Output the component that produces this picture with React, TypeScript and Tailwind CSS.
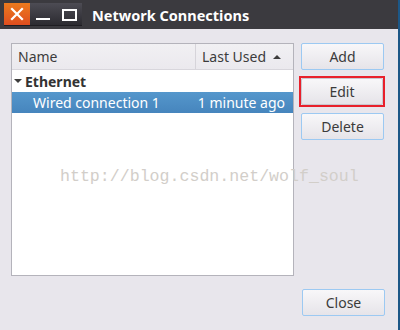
import React from "react";

function Btn({ children, className = "" }: { children: React.ReactNode; className?: string }) {
  return (
    <div
      className={
        "h-[27px] w-[83px] flex items-center justify-center rounded-[2px] border border-[#9cc9f2] bg-gradient-to-b from-[#f8f7f9] to-[#e6e4e9] text-[14px] text-[#3b3b3b] " +
        className
      }
    >
      {children}
    </div>
  );
}

export default function App() {
  return (
    <div
      className="relative w-[400px] h-[330px] overflow-hidden bg-[#e8e6ec] flex flex-col"
      style={{ fontFamily: '"Noto Sans", "Open Sans", sans-serif' }}
    >
      {/* Title bar */}
      <div className="h-[29px] bg-[#3b3a3f] flex items-start pt-[3px] pl-[4px] shrink-0">
        <div className="flex h-[23px] border-b border-[#1e1d22]">
          <div className="w-[26px] h-[22px] bg-gradient-to-b from-[#ec7a1e] to-[#df4d1f] flex items-center justify-center">
            <svg width="14" height="14" viewBox="0 0 14 14">
              <path d="M2 2 L12 12 M12 2 L2 12" stroke="#fff" strokeWidth="2.2" strokeLinecap="square" />
            </svg>
          </div>
          <div className="w-[52px] h-[22px] bg-gradient-to-b from-[#4d4c54] to-[#2c2b31] flex items-center">
            <svg width="52" height="22" viewBox="0 0 52 22">
              <rect x="6" y="15" width="14" height="2" fill="#fff" />
              <rect x="33" y="7" width="13" height="10" fill="none" stroke="#fff" strokeWidth="2" />
            </svg>
          </div>
        </div>
        <div className="ml-[10px] mt-[2px] text-[14.5px] font-bold text-white leading-[20px]">Network Connections</div>
      </div>

      {/* Body */}
      <div className="flex-1 flex flex-col pl-[11px] pt-[14px]">
        <div className="flex">
          <div className="w-[283px] h-[233px] border border-[#b4b3bb] bg-white flex flex-col">
            <div className="h-[26px] flex border-b border-[#d8d6dc] bg-gradient-to-b from-[#f1f0f3] to-[#ebe9ee] text-[14px] text-[#3c3c3c]">
              <div className="w-[184px] border-r border-[#d6d4da] flex items-center pl-[6px]">Name</div>
              <div className="flex-1 flex items-center pl-[6px]">
                Last Used
                <svg width="10" height="8" viewBox="0 0 10 8" className="ml-[6px]">
                  <path d="M1 6 L5 2 L9 6 Z" fill="#3c3c3c" />
                </svg>
              </div>
            </div>
            <div className="h-[22px] flex items-center text-[14px] font-bold text-[#333] pl-[1px]">
              <svg width="10" height="8" viewBox="0 0 10 8" className="mr-[2px]">
                <path d="M1 2 L9 2 L5 6 Z" fill="#3c3c3c" />
              </svg>
              Ethernet
            </div>
            <div className="h-[21px] flex items-center justify-between bg-gradient-to-b from-[#5597cc] to-[#4685bd] text-white text-[14px] pl-[21px] pr-[8px]">
              <span>Wired connection 1</span>
              <span>1 minute ago</span>
            </div>
          </div>
          <div className="ml-[7px] flex flex-col">
            <Btn>Add</Btn>
            <div className="mt-[6px] border-2 border-[#e8202b] w-[86px] h-[31px] -ml-[2px] flex items-center justify-start pl-[0px]">
              <Btn className="border-[#c9c7cf]">Edit</Btn>
            </div>
            <Btn className="mt-[6px]">Delete</Btn>
          </div>
        </div>
        <div className="flex mt-[13px] pl-[291px]">
          <Btn>Close</Btn>
        </div>
      </div>

      {/* right edge strip */}
      <div className="absolute right-0 top-0 w-[2px] h-full bg-[#1c5787]" />

      {/* watermark */}
      <div
        className="absolute left-[60px] top-[165px] text-[16.6px] text-[#d2cec9] pointer-events-none"
        style={{ fontFamily: '"Liberation Mono", monospace' }}
      >
        http://blog.csdn.net/wolf_soul
      </div>
    </div>
  );
}
